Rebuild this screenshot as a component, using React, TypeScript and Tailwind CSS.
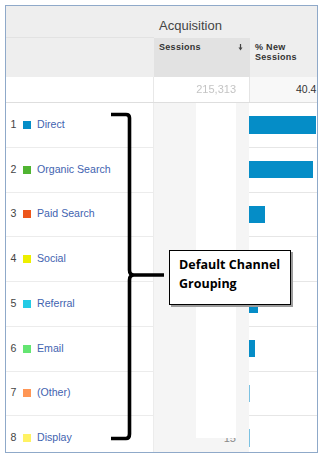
const rows = [
  { n: 1, label: 'Direct', color: '#058dc7', bar: 67, sessions: '' },
  { n: 2, label: 'Organic Search', color: '#50b432', bar: 63.6, sessions: '' },
  { n: 3, label: 'Paid Search', color: '#ed561b', bar: 15.6, sessions: '' },
  { n: 4, label: 'Social', color: '#edef00', bar: 11, sessions: '' },
  { n: 5, label: 'Referral', color: '#24cbe5', bar: 8.6, sessions: '' },
  { n: 6, label: 'Email', color: '#64e572', bar: 5.6, sessions: '' },
  { n: 7, label: '(Other)', color: '#ff9655', bar: 1, sessions: '' },
  { n: 8, label: 'Display', color: '#fff263', bar: 1, sessions: '15' },
];

export default function App() {
  return (
    <div className="relative w-[325px] h-[460px] bg-white pl-[5px] pt-[5px] font-['Liberation_Sans',Arial,sans-serif]">
      <div className="w-[313px] h-[448px] border border-[#8fa9c9] overflow-hidden flex flex-col">
        {/* Cabeçalho: linha 1 */}
        <div className="flex h-[32px] shrink-0 bg-[#eeeeee]">
          <div className="w-[148px] shrink-0 border-b border-[#e2e2e2]" />
          <div className="flex-1 min-w-0 pl-[5px] pt-[12px] text-[13px] leading-[15px] text-[#444]">Acquisition</div>
        </div>

        {/* Cabeçalho: linha 2 */}
        <div className="flex h-[39px] shrink-0 bg-[#eeeeee]">
          <div className="w-[148px] shrink-0" />
          <div className="w-[96px] shrink-0 bg-[#e2e2e2] pl-[5px] pr-[7px] pt-[3.5px] flex justify-between">
            <span className="text-[9px] font-bold tracking-[0.3px] leading-[10.5px] text-[#333]">Sessions</span>
            <svg width="5" height="7" viewBox="0 0 5 7" className="mt-[2px]">
              <path d="M2.5 0 V4" stroke="#444" strokeWidth="1.2" />
              <path d="M0.5 3.5 H4.5 L2.5 6.5 Z" fill="#444" />
            </svg>
          </div>
          <div className="flex-1 min-w-0 pl-[5px] pt-[3.5px] text-[9px] font-bold tracking-[0.3px] leading-[10.5px] text-[#333] whitespace-nowrap">
            % New
            <br />
            Sessions
          </div>
        </div>

        {/* Totais */}
        <div className="flex h-[26px] shrink-0 border-b border-[#dedede]">
          <div className="w-[148px] shrink-0 border-r border-[#e8e8e8]" />
          <div className="w-[95px] shrink-0 flex items-center justify-end pr-[13px] text-[11px] text-[#c4c4c4] blur-[0.7px]">
            215,313
          </div>
          <div className="flex-1 min-w-0 flex items-center pl-[46px] bg-[#f8f8f8] border-l border-[#e4e4e4] whitespace-nowrap text-[10.5px] text-[#333]">
            40.4
          </div>
        </div>

        {/* Linhas */}
        {rows.map((row) => (
          <div key={row.n} className="flex h-[44.75px] shrink-0">
            <div className="w-[148px] shrink-0 flex items-center pl-[4.5px] border-b border-r border-[#ececec] text-[10.6px]">
              <span className="w-[12px] text-[#444]">{row.n}</span>
              <span className="w-[8px] h-[8px] mr-[6.5px]" style={{ backgroundColor: row.color }} />
              <span className="text-[#3f63b0]">{row.label}</span>
            </div>
            <div className="w-[95px] shrink-0 flex items-center justify-end pr-[13px] bg-[#f5f5f5] text-[11px] text-[#888]">
              {row.sessions}
            </div>
            <div className="flex-1 min-w-0 flex items-center border-b border-[#e6e6e6]">
              <div
                className={row.n > 6 ? 'h-[17.6px] bg-[#7cc2e2]' : 'h-[17.6px] bg-[#058dc7]'}
                style={{ width: row.bar }}
              />
            </div>
          </div>
        ))}
      </div>

      {/* Tarja branca sobre a coluna de sessões */}
      <div className="absolute left-[196px] top-[103px] w-[40px] h-[335px] bg-white" />

      {/* Chave */}
      <svg className="absolute left-0 top-0 pointer-events-none" width="325" height="460" viewBox="0 0 325 460">
        <path
          d="M111 114.5 H126 Q129.5 114.5 129.5 118 V270 Q129.5 275 134 275 H164 M134 275 Q129.5 275 129.5 280 V434 Q129.5 438.5 126 438.5 H111"
          fill="none"
          stroke="#000"
          strokeWidth="3.6"
          strokeLinejoin="round"
        />
      </svg>

      {/* Caixa de anotação */}
      <div className="absolute left-[169px] top-[249.5px] w-[122px] h-[55px] border border-black bg-white shadow-[2px_2px_0_#9c9c9c] pl-[9px] pt-[4px] font-['Open_Sans',sans-serif] font-bold text-[12.5px] leading-[19px] text-black">
        Default Channel
        <br />
        Grouping
      </div>
    </div>
  );
}
